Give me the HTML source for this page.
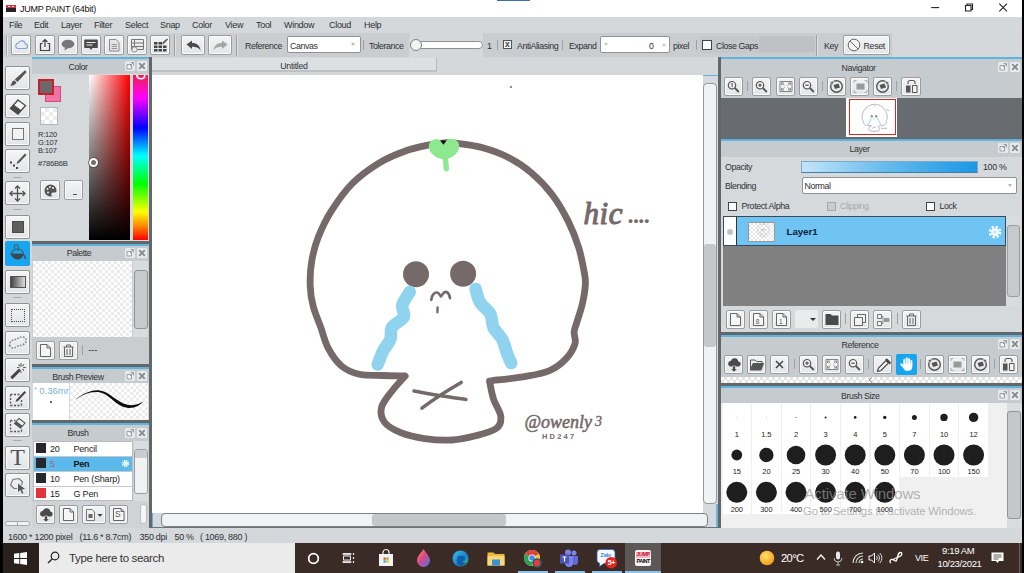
<!DOCTYPE html>
<html><head><meta charset="utf-8"><title>JUMP PAINT</title>
<style>
*{box-sizing:border-box;margin:0;padding:0}
html,body{width:1024px;height:573px;overflow:hidden;background:#d4d8db;font-family:"Liberation Sans","DejaVu Sans",sans-serif;color:#2a2c2e}
#r{position:relative;width:1024px;height:573px;overflow:hidden}
.a{position:absolute}
.t{position:absolute;white-space:nowrap;font-size:10px;line-height:12px;color:#2f3133}
.hd{position:absolute;background:#c6cbcf;border-top:2px solid #5db4dc}
.hd .t{top:2px;font-size:8.8px;letter-spacing:-.4px;color:#333}
.bt{position:absolute;width:19px;height:19px;background:linear-gradient(#f3f4f4,#e3e5e7);border:1px solid #999da0;border-radius:2px;box-shadow:inset 0 0 0 1px #fbfbfb}
.tb{position:absolute;left:5px;width:25px;height:24px;background:linear-gradient(#f4f5f5,#e2e4e6);border:1px solid #8f9396;border-radius:2px;box-shadow:inset 0 0 0 1px #fbfbfb}
.sep{position:absolute;width:1px;background:#9da1a4}
svg{position:absolute;overflow:visible}
</style></head><body><div id="r">

<!-- title bar -->
<div class="a" id="title" style="left:0;top:0;width:1024px;height:17px;background:#fff"></div>
<div class="a" style="left:497px;top:0;width:33px;height:1px;background:#3a6ea5"></div>
<div class="a" style="left:6px;top:4.500px;width:10px;height:7.500px;background:#2a2222;border-top:3px solid #d8303a"></div><div class="a" style="left:8px;top:5.500px;width:2px;height:1px;background:#fff"></div><div class="a" style="left:12px;top:5.500px;width:2px;height:1px;background:#fff"></div>
<div class="t" style="left:20px;top:3px;font-size:9px;letter-spacing:-.25px;color:#111">JUMP PAINT (64bit)</div>
<svg style="left:925px;top:0" width="99" height="17" viewBox="925 0 99 17"><path d="M931.200 7.600h8" stroke="#222" stroke-width="1.100"/><path d="M965.500 5.500h5.500v5.500h-5.500zM967 5.500V4h5.500v5.500H971" stroke="#222" fill="none" stroke-width="1.100"/><path d="M999.300 3.600l7.700 7.700M1007 3.600l-7.700 7.700" stroke="#222" stroke-width="1.100"/></svg>

<!-- menu bar -->
<div class="a" id="menu" style="left:0;top:17px;width:1024px;height:16px;background:#d4d8db"></div>
<div class="t" style="top:19px;left:9px;font-size:9px;letter-spacing:-.3px">File</div>
<div class="t" style="top:19px;left:34px;font-size:9px;letter-spacing:-.3px">Edit</div>
<div class="t" style="top:19px;left:61px;font-size:9px;letter-spacing:-.3px">Layer</div>
<div class="t" style="top:19px;left:94px;font-size:9px;letter-spacing:-.3px">Filter</div>
<div class="t" style="top:19px;left:125px;font-size:9px;letter-spacing:-.3px">Select</div>
<div class="t" style="top:19px;left:160px;font-size:9px;letter-spacing:-.3px">Snap</div>
<div class="t" style="top:19px;left:192px;font-size:9px;letter-spacing:-.3px">Color</div>
<div class="t" style="top:19px;left:225px;font-size:9px;letter-spacing:-.3px">View</div>
<div class="t" style="top:19px;left:256px;font-size:9px;letter-spacing:-.3px">Tool</div>
<div class="t" style="top:19px;left:284px;font-size:9px;letter-spacing:-.3px">Window</div>
<div class="t" style="top:19px;left:329px;font-size:9px;letter-spacing:-.3px">Cloud</div>
<div class="t" style="top:19px;left:364px;font-size:9px;letter-spacing:-.3px">Help</div>

<!-- toolbar -->
<div class="a" id="toolbar" style="left:0;top:33px;width:1024px;height:24px;background:#d4d8db"></div><div class="a" style="left:3px;top:33px;width:233px;height:24px;background:#cbcfd2"></div>
<!--TOOLBAR-S-->
<div class="a" style="left:236px;top:33px;width:656px;height:24px;background:#c9cdd0"></div>
<div class="a" style="left:409px;top:33px;width:74px;height:24px;background:#d5d8db"></div>
<div class="a" style="left:6px;top:36px;width:2px;height:19px;border-left:1px solid #a4a8ab;border-right:1px solid #e6e8e9"></div>
<div class="bt" style="left:11px;top:35px;width:20px;height:20px"><svg style="left:2px;top:3px" width="14" height="11" viewBox="0 0 14 11"><path d="M3.5 9.5h7.5a2.3 2.3 0 0 0 .3-4.6a3.6 3.6 0 0 0-6.9-.8a2.8 2.8 0 0 0-.9 5.4z" fill="none" stroke="#7ea8d6" stroke-width="1.1"/></svg></div>
<div class="bt" style="left:35px;top:35px;width:20px;height:20px"><svg style="left:3px;top:2px" width="12" height="14" viewBox="0 0 12 14"><path d="M3.5 5.5h-2v7h9v-7h-2M6 9V1.5M3.5 4L6 1.5L8.500 4" fill="none" stroke="#444" stroke-width="1.2"/></svg></div>
<div class="bt" style="left:58px;top:35px;width:20px;height:20px"><svg style="left:2px;top:3px" width="14" height="12" viewBox="0 0 14 12"><ellipse cx="7" cy="5" rx="6.300" ry="4.300" fill="#777"/><path d="M4 8l-.5 3.500L8 8.500z" fill="#777"/></svg></div>
<div class="bt" style="left:81px;top:35px;width:20px;height:20px"><svg style="left:2px;top:3px" width="14" height="12" viewBox="0 0 14 12"><path d="M1 .5h12a.8.8 0 0 1 .8.800v7a.8.8 0 0 1-.8.800H8.500L7 11L5.500 9.100H1a.8.8 0 0 1-.8-.8v-7A.8.8 0 0 1 1 .5z" fill="#4a4a4a"/><path d="M2.500 3.500h9M2.500 6h6" stroke="#eee" stroke-width="1.100"/></svg></div>
<div class="bt" style="left:104px;top:35px;width:20px;height:20px"><svg style="left:4px;top:3px" width="11" height="13" viewBox="0 0 11 13"><path d="M.5.500h6.500l3 3v8.500h-9.500z" fill="#e4e4e4" stroke="#8a8a8a"/><path d="M2.500 5.500h5.500M2.500 7.500h5.500M2.500 9.500h5.500" stroke="#8a8a8a" stroke-width=".9"/></svg></div>
<div class="bt" style="left:127px;top:35px;width:20px;height:20px"><svg style="left:2px;top:2px" width="15" height="15" viewBox="0 0 15 15"><path d="M1.500 1.500h12v10h-12zM1.500 5h12M1.500 8.500h12M4.500 1.500v10" fill="none" stroke="#777" stroke-width="1"/><circle cx="4.500" cy="11.500" r="2.600" fill="#ececec" stroke="#888" stroke-width=".9"/></svg></div>
<div class="bt" style="left:150px;top:35px;width:20px;height:20px"><svg style="left:2px;top:2px" width="15" height="15" viewBox="0 0 15 15"><path d="M1 4h3.500v2.500H1zM5.500 4H9v2.500H5.500zM1 7.500h3.500V10H1zM5.500 7.500H9V10H5.500zM10 7.500h3.500V10H10zM1 11h3.500v2.500H1zM5.500 11H9v2.500H5.500zM10 11h3.500v2.500H10z" fill="#444"/><path d="M9 6.500l1-2.500l4-3.500l1 1l-3.700 3.800z" fill="#555"/></svg></div>
<div class="a" style="left:174px;top:35px;width:2px;height:21px;border-left:1px solid #9a9ea1;border-right:1px solid #e1e3e5"></div>
<div class="bt" style="left:181px;top:35px;width:24px;height:20px"><svg style="left:4px;top:4px" width="15" height="11" viewBox="0 0 15 11"><path d="M.5 4.500L6 .5v2.500c5 0 8 2.500 8.500 7.500c-2-3-4.500-3.700-8.500-3.700V9z" fill="#4a4a4a"/></svg></div>
<div class="bt" style="left:208px;top:35px;width:24px;height:20px"><svg style="left:4px;top:4px" width="15" height="11" viewBox="0 0 15 11"><path d="M14.500 4.500L9 .5v2.500c-5 0-8 2.500-8.500 7.500c2-3 4.500-3.700 8.500-3.700V9z" fill="#a4a6a8"/></svg></div>
<div class="a" style="left:236px;top:35px;width:2px;height:21px;border-left:1px solid #9a9ea1;border-right:1px solid #e1e3e5"></div>
<div class="t" style="left:245px;top:39.5px;font-size:8.8px;letter-spacing:-.4px">Reference</div>
<div class="a" style="left:287px;top:36px;width:74px;height:17px;background:#fff;border:1px solid #8e9295;border-radius:2px"></div>
<div class="t" style="left:290px;top:39.5px;font-size:8.8px;letter-spacing:-.4px">Canvas</div>
<div class="a" style="left:351px;top:43px;width:0;height:0;border-left:2.500px solid transparent;border-right:2.500px solid transparent;border-top:3px solid #b5b8ba"></div>
<div class="sep" style="left:363px;top:40px;height:10px"></div>
<div class="t" style="left:369px;top:39.5px;font-size:8.8px;letter-spacing:-.4px">Tolerance</div>
<div class="a" style="left:413px;top:41px;width:70px;height:8px;background:#fff;border:1px solid #8e9295;border-radius:4px"></div>
<div class="a" style="left:410px;top:39px;width:12px;height:12px;background:#f2f3f3;border:1px solid #7e8285;border-radius:6px"></div>
<div class="t" style="left:487px;top:39.5px;font-size:8.8px;letter-spacing:-.4px">1</div>
<div class="sep" style="left:497px;top:40px;height:10px"></div>
<div class="a" style="left:503px;top:40px;width:9px;height:9px;background:#f4f4f4;border:1px solid #555"></div>
<div class="t" style="left:505px;top:38.300px;font-size:8.500px;color:#444;font-weight:bold">x</div>
<div class="t" style="left:517px;top:39.5px;font-size:8.8px;letter-spacing:-.4px">AntiAliasing</div>
<div class="sep" style="left:562px;top:40px;height:10px"></div>
<div class="t" style="left:569px;top:39.5px;font-size:8.8px;letter-spacing:-.4px">Expand</div>
<div class="a" style="left:600px;top:36px;width:70px;height:17px;background:#fff;border:1px solid #8e9295;border-radius:2px"></div>
<div class="a" style="left:604px;top:43px;width:0;height:0;border-left:2.500px solid transparent;border-right:2.500px solid transparent;border-top:3px solid #c5c8ca"></div>
<div class="a" style="left:662px;top:43px;width:0;height:0;border-left:2.500px solid transparent;border-right:2.500px solid transparent;border-bottom:3px solid #c5c8ca"></div>
<div class="t" style="left:649px;top:39.5px;font-size:8.8px;letter-spacing:-.4px">0</div>
<div class="t" style="left:673px;top:39.5px;font-size:8.8px;letter-spacing:-.4px">pixel</div>
<div class="sep" style="left:696px;top:40px;height:10px"></div>
<div class="a" style="left:700px;top:36px;width:115px;height:17px;background:#c4c8cb"></div>
<div class="a" style="left:702px;top:40px;width:10px;height:10px;background:#fff;border:1px solid #444"></div>
<div class="t" style="left:716px;top:39.5px;font-size:8.8px;letter-spacing:-.4px">Close Gaps</div>
<div class="a" style="left:759px;top:37px;width:56px;height:15px;background:#bfc2c5"></div>
<div class="a" style="left:816px;top:35px;width:2px;height:21px;border-left:1px solid #9a9ea1;border-right:1px solid #e1e3e5"></div>
<div class="t" style="left:824px;top:39.5px;font-size:8.8px;letter-spacing:-.4px">Key</div>
<div class="bt" style="left:843px;top:35px;width:47px;height:20px"><svg style="left:3px;top:2px" width="14" height="14" viewBox="0 0 14 14"><circle cx="7" cy="7" r="5.800" fill="#f4f4f4" stroke="#6a6a6a" stroke-width="1"/><path d="M3 3l8 8" stroke="#6a6a6a" stroke-width="1"/></svg><div class="t" style="left:19.500px;top:3.500px;font-size:8.800px;letter-spacing:-.3px">Reset</div></div>
<!--TOOLBAR-E-->

<!-- left tools -->
<div class="a" id="lefttools" style="left:3px;top:57px;width:29px;height:471px;background:#d4d8db"></div>
<!--LEFTTOOLS-S-->
<div class="tb" style="top:66px"><svg style="left:3px;top:3px" width="18" height="17" viewBox="0 0 18 17"><path d="M16 .300l1.700 1.700L8.500 12L5.800 9.500z" fill="#555"/><path d="M5.500 10.500l2 2c-1 2.500-4 3.500-6.500 3c1.500-.8 1.500-2 2-3.200c.4-1.200 1.500-1.800 2.500-1.800z" fill="#555"/></svg></div>
<div class="tb" style="top:94px"><svg style="left:3px;top:4px" width="18" height="16" viewBox="0 0 18 16"><path d="M9 1L16.500 6.500L9 15L1.500 9.500z" fill="#f6f6f6" stroke="#4a4a4a" stroke-width="1.300"/><path d="M1.500 9.500L4.500 6L12 11.500L9 15z" fill="#4a4a4a" stroke="#4a4a4a" stroke-width="1"/></svg></div>
<div class="tb" style="top:122px"><div class="a" style="left:6px;top:5px;width:12px;height:12px;border:1px solid #777;background:#f3f3f3"></div></div>
<div class="tb" style="top:149px"><svg style="left:3px;top:3px" width="18" height="17" viewBox="0 0 18 17"><path d="M16 .500l1.500 1.500L10 10l-2.500 1l1-2.500z" fill="#555"/><path d="M1 8.500h2v2H1zM4 11.500h2v2H4zM7 14h2v2H7z" fill="#444"/></svg></div>
<div class="a" style="left:13px;top:177px;width:9px;height:1px;background:#a8acaf"></div>
<div class="tb" style="top:181px"><svg style="left:3px;top:3px" width="17" height="17" viewBox="0 0 17 17"><path d="M8.500 1v15M1 8.500h15" stroke="#555" stroke-width="1.300"/><path d="M6 3.500L8.500 1L11 3.500M6 13.500L8.500 16L11 13.500M3.500 6L1 8.500L3.500 11M13.500 6L16 8.500L13.500 11" fill="none" stroke="#555" stroke-width="1.300"/></svg></div>
<div class="a" style="left:13px;top:209px;width:9px;height:1px;background:#a8acaf"></div>
<div class="tb" style="top:215px"><div class="a" style="left:6px;top:5px;width:12px;height:12px;background:#5e5e5e;border:1px solid #4a4a4a"></div></div>
<div class="a" style="left:5px;top:241px;width:25px;height:25px;background:#16a5ee;border-radius:2px"><svg style="left:4px;top:3px" width="18" height="19" viewBox="0 0 18 19"><path d="M5.500 4.500V2.500a1.800 1.800 0 0 1 3.600 0V7" fill="none" stroke="#4a5560" stroke-width="1.100"/><path d="M2 10c1-3 4-5 7-5s5.500 2.500 5.500 5z" fill="none" stroke="#4a5560" stroke-width="1.100"/><path d="M2 10h12.500c-.5 3.500-3 5.500-6 5.500s-6-2.500-6.500-5.500z" fill="#3d4750"/><path d="M14.500 10c1.500 1 2.500 2.800 2.500 4.500c0 1-1.500 1-1.500 0c0-1.500-.5-2.500-1.500-3.500z" fill="#3d4750"/></svg></div>
<div class="tb" style="top:270px"><div class="a" style="left:4px;top:5px;width:16px;height:12px;background:linear-gradient(90deg,#444,#ddd);border:1px solid #555"></div></div>
<div class="a" style="left:13px;top:297px;width:9px;height:1px;background:#a8acaf"></div>
<div class="tb" style="top:303px"><div class="a" style="left:5px;top:4.500px;width:13.500px;height:13px;border:1.600px dotted #4a4a4a"></div></div>
<div class="tb" style="top:331px"><svg style="left:2px;top:4px" width="20" height="15" viewBox="0 0 20 15"><path d="M2 10c-2-3 2-6 5-6.500s4-3 8-2.500s4 5 1 7s-5 1-8 3s-5 1-6-1z" fill="none" stroke="#858585" stroke-width="1.600" stroke-dasharray="1.600 1.400"/></svg></div>
<div class="tb" style="top:358px"><svg style="left:3px;top:2px" width="18" height="19" viewBox="0 0 18 19"><path d="M10 7.500l2 2L3.500 18.200l-2.200-2.200z" fill="#444"/><path d="M12 2v4M12 10v2M8 6.500h2.500M14 6.500h3M9.500 3.500l1.500 1.500M15 3.500L13.500 5M15 9.500L13.500 8" stroke="#666" stroke-width="1.100"/></svg></div>
<div class="tb" style="top:386px"><svg style="left:3px;top:3px" width="18" height="17" viewBox="0 0 18 17"><path d="M1.500 4.500h9M1.500 4.500v11M1.500 15.500h11M12.500 15.500v-6" fill="none" stroke="#555" stroke-width="1.300" stroke-dasharray="2 1.500"/><path d="M15.500 1l1.500 1.500L9 11l-2.500 1l1-2.500z" fill="#444"/></svg></div>
<div class="tb" style="top:413px"><svg style="left:3px;top:3px" width="18" height="17" viewBox="0 0 18 17"><path d="M1.500 3.500h5M1.500 3.500v11M1.500 14.500h11M12.500 14.500v-3" fill="none" stroke="#555" stroke-width="1.300" stroke-dasharray="2 1.500"/><path d="M10 1.500L16 6l-4.500 5L5.500 6.500z" fill="#f4f4f4" stroke="#555" stroke-width="1.100"/><path d="M5.500 6.500l2-2.300L13.500 8.700l-2 2.300z" fill="#555"/></svg></div>
<div class="a" style="left:13px;top:440px;width:9px;height:1px;background:#a8acaf"></div>
<div class="tb" style="top:446px"><div class="t" style="left:2.500px;top:-2px;width:18px;text-align:center;font-family:'Liberation Serif',serif;font-size:24px;line-height:24px;color:#555">T</div></div>
<div class="tb" style="top:473px;height:24px"><svg style="left:3px;top:3px" width="18" height="18" viewBox="0 0 18 18"><path d="M1.500 8L4 2.500l6-1L13.500 5l-1 3" fill="none" stroke="#777" stroke-width="1.100"/><path d="M1.500 8L5 11.500h3" fill="none" stroke="#777" stroke-width="1.100"/><path d="M9 6.500l7 5.500l-3.300.5l1.800 3.500l-1.500.7l-1.700-3.600L9 15z" fill="#555"/></svg></div>
<div class="a" style="left:5px;top:521px;width:25px;height:5px;background:#f2f3f4;border:1px solid #a5a9ac;border-radius:2px"></div>
<div class="a" style="left:17px;top:522px;width:1px;height:3px;background:#a5a9ac"></div>
<!--LEFTTOOLS-E-->

<!-- left panels -->
<!--LEFTPANELS-S-->
<!-- panel right dark border -->
<div class="a" style="left:149px;top:57px;width:3px;height:471px;background:#63676a"></div>
<!-- COLOR -->
<div class="hd" style="left:32px;top:57px;width:117px;height:17px"><div class="t" style="left:0;width:92px;text-align:center">Color</div></div>
<div class="a" style="left:32px;top:74px;width:117px;height:167px;background:#d5d9dc"></div>
<svg style="left:125px;top:61px" width="22" height="10" viewBox="0 0 22 10"><rect x="0" y="0" width="10" height="10" rx="1.500" fill="#e6e9eb"/><path d="M2 3.500h4.500v4.500H2z" fill="#f2f3f4" stroke="#9aa0a4" stroke-width="1"/><path d="M5.500 1.500H8.500v3M8.300 1.700L5 5" fill="none" stroke="#9aa0a4" stroke-width="1"/><rect x="12" y="0" width="10" height="10" rx="1.500" fill="#e9ebed"/><path d="M14.200 2.200l5.600 5.600M19.800 2.200l-5.600 5.600" stroke="#868b8f" stroke-width="1.900"/></svg>
<div class="a" style="left:45px;top:86px;width:16px;height:16px;background:#f272a4;border:1px solid #d04a84"></div>
<div class="a" style="left:38px;top:79px;width:16px;height:16px;background:#6e6969;border:2px solid #c5202e"></div>
<div class="a" style="left:40px;top:107px;width:18px;height:18px;border:1px solid #b4b8bb;background:#fff;background-image:linear-gradient(45deg,#ececec 25%,transparent 25%,transparent 75%,#ececec 75%),linear-gradient(45deg,#ececec 25%,transparent 25%,transparent 75%,#ececec 75%);background-size:8px 8px;background-position:0 0,4px 4px"></div>
<div class="t" style="left:38px;top:130px;font-size:7.500px;line-height:10px;letter-spacing:-.2px">R:120</div>
<div class="t" style="left:38px;top:138px;font-size:7.500px;line-height:10px;letter-spacing:-.2px">G:107</div>
<div class="t" style="left:38px;top:146px;font-size:7.500px;line-height:10px;letter-spacing:-.2px">B:107</div>
<div class="t" style="left:38px;top:159.200px;font-size:7.600px;line-height:10px;letter-spacing:-.25px">#786B6B</div>
<div class="bt" style="left:40px;top:180px;width:20px;height:20px"><svg style="left:3px;top:3px" width="13" height="13" viewBox="0 0 13 13"><path d="M6.500.500a6 6 0 1 0 0 12c1.500 0 1.500-1.200 1-2s0-2 1.500-2h2c1 0 1.500-.8 1.500-2a6 6 0 0 0-6-6z" fill="#555"/><circle cx="3.500" cy="5" r="1" fill="#eee"/><circle cx="6" cy="3" r="1" fill="#eee"/><circle cx="9" cy="4" r="1" fill="#eee"/><circle cx="4" cy="8.500" r="1" fill="#eee"/></svg></div>
<div class="bt" style="left:64px;top:180px;width:19px;height:20px"><div class="a" style="left:8px;top:13px;width:4px;height:1px;background:#555"></div></div>
<div class="a" style="left:89px;top:75px;width:41px;height:165px;background:linear-gradient(to bottom,rgba(0,0,0,0),#000),linear-gradient(to right,#fff,#ff0000)"></div>
<div class="a" style="left:133px;top:75px;width:15px;height:165px;background:linear-gradient(to bottom,#f02050 0%,#ff00ff 14%,#0000ff 32%,#00ffff 49%,#00ff00 66%,#ffff00 83%,#ff8000 92%,#ff0000 100%)"></div>
<div class="a" style="left:88.500px;top:157.500px;width:9px;height:9px;border:2px solid #fff;border-radius:50%;background:#786b6b;box-shadow:0 0 0 .7px #444"></div>
<div class="a" style="left:135.500px;top:69.500px;width:10px;height:10px;border:2px solid #fff;border-radius:50%;clip-path:inset(5.500px 0 0 0)"></div>
<!-- PALETTE -->
<div class="a" style="left:32px;top:241px;width:117px;height:3px;background:#63676a"></div>
<div class="hd" style="left:32px;top:244px;width:117px;height:17px"><div class="t" style="left:0;width:94px;text-align:center;top:1px">Palette</div></div>
<svg style="left:125px;top:248px" width="22" height="10" viewBox="0 0 22 10"><rect x="0" y="0" width="10" height="10" rx="1.500" fill="#e6e9eb"/><path d="M2 3.500h4.500v4.500H2z" fill="#f2f3f4" stroke="#9aa0a4" stroke-width="1"/><path d="M5.500 1.500H8.500v3M8.300 1.700L5 5" fill="none" stroke="#9aa0a4" stroke-width="1"/><rect x="12" y="0" width="10" height="10" rx="1.500" fill="#e9ebed"/><path d="M14.200 2.200l5.600 5.600M19.800 2.200l-5.600 5.600" stroke="#868b8f" stroke-width="1.900"/></svg>
<div class="a" style="left:32px;top:261px;width:117px;height:103px;background:#c9cdd0"></div>
<div class="a" style="left:33px;top:261px;width:99px;height:76px;background:#fff;background-image:linear-gradient(45deg,#ebebeb 25%,transparent 25%,transparent 75%,#ebebeb 75%),linear-gradient(45deg,#ebebeb 25%,transparent 25%,transparent 75%,#ebebeb 75%);background-size:6px 6px;background-position:0 0,3px 3px"></div>
<div class="a" style="left:133px;top:261px;width:15px;height:76px;background:#d9dcdf"></div>
<div class="a" style="left:133.500px;top:270px;width:14px;height:59px;background:#c6cacd;border:1px solid #8f9396;border-radius:3px"></div>
<div class="bt" style="left:36px;top:341px;width:19px;height:19px"><svg style="left:3px;top:2px" width="11" height="13" viewBox="0 0 11 13"><path d="M.5.500h6.500l3.500 3.500v8.500H.5z" fill="#f6f6f6" stroke="#666" stroke-width="1"/><path d="M7 .5v3.500h3.500" fill="none" stroke="#666" stroke-width="1"/></svg></div>
<div class="bt" style="left:59px;top:341px;width:19px;height:19px"><svg style="left:3px;top:2px" width="11" height="13" viewBox="0 0 11 13"><path d="M.5 3h10M3.500 3V1h4v2M1.500 3v9.500h8V3M4 5v6M7 5v6" fill="none" stroke="#666" stroke-width="1"/></svg></div>
<div class="sep" style="left:82px;top:345px;height:10px"></div>
<div class="t" style="left:88.500px;top:344px;font-size:8px;letter-spacing:.3px;color:#3a3a3a;font-weight:bold">---</div>
<!-- BRUSH PREVIEW -->
<div class="a" style="left:32px;top:364px;width:117px;height:3px;background:#63676a"></div>
<div class="hd" style="left:32px;top:367px;width:117px;height:16px"><div class="t" style="left:0;width:92px;text-align:center">Brush Preview</div></div>
<svg style="left:125px;top:370.500px" width="22" height="10" viewBox="0 0 22 10"><rect x="0" y="0" width="10" height="10" rx="1.500" fill="#e6e9eb"/><path d="M2 3.500h4.500v4.500H2z" fill="#f2f3f4" stroke="#9aa0a4" stroke-width="1"/><path d="M5.500 1.500H8.500v3M8.300 1.700L5 5" fill="none" stroke="#9aa0a4" stroke-width="1"/><rect x="12" y="0" width="10" height="10" rx="1.500" fill="#e9ebed"/><path d="M14.200 2.200l5.600 5.600M19.800 2.200l-5.600 5.600" stroke="#868b8f" stroke-width="1.900"/></svg>
<div class="a" style="left:32px;top:383px;width:117px;height:37px;background:#d5d9dc"></div>
<div class="a" style="left:33px;top:383px;width:36px;height:36.500px;background:#fff"></div>
<div class="a" style="left:70px;top:383px;width:78px;height:36.500px;background:#fff;background-image:linear-gradient(45deg,#ececec 25%,transparent 25%,transparent 75%,#ececec 75%),linear-gradient(45deg,#ececec 25%,transparent 25%,transparent 75%,#ececec 75%);background-size:6px 6px;background-position:0 0,3px 3px"></div>
<div class="t" style="left:34px;top:383.500px;font-size:9.500px;line-height:11px;color:#7ab0dc;width:34.500px;overflow:hidden"><span style="font-size:7px;vertical-align:2px">*</span> 0.36mm</div>
<div class="a" style="left:49.500px;top:400.500px;width:2px;height:2px;background:#333;border-radius:1px"></div>
<svg style="left:70px;top:383px" width="78" height="36" viewBox="0 0 78 36"><path d="M4.500 17C12 11.500 20 7 28 7.300C40 8 46 19.500 57.500 21.800C64 23 69.500 21 73.800 18.300C70 22.500 64 25.800 57 24.800C45 23 40 10.500 28 9C20 8.300 12 12 4.500 17z" fill="#0c0c0c"/></svg>
<!-- BRUSH -->
<div class="a" style="left:32px;top:420px;width:117px;height:3px;background:#63676a"></div>
<div class="hd" style="left:32px;top:423px;width:117px;height:18px"><div class="t" style="left:0;width:92px;text-align:center;top:1.500px">Brush</div></div>
<svg style="left:125px;top:428px" width="22" height="10" viewBox="0 0 22 10"><rect x="0" y="0" width="10" height="10" rx="1.500" fill="#e6e9eb"/><path d="M2 3.500h4.500v4.500H2z" fill="#f2f3f4" stroke="#9aa0a4" stroke-width="1"/><path d="M5.500 1.500H8.500v3M8.300 1.700L5 5" fill="none" stroke="#9aa0a4" stroke-width="1"/><rect x="12" y="0" width="10" height="10" rx="1.500" fill="#e9ebed"/><path d="M14.200 2.200l5.600 5.600M19.800 2.200l-5.600 5.600" stroke="#868b8f" stroke-width="1.900"/></svg>
<div class="a" style="left:32px;top:441px;width:117px;height:87px;background:#cfd3d6"></div>
<div class="a" style="left:33px;top:441px;width:100px;height:60px;background:#fff;border:1px solid #b9bdc0"></div>
<div class="a" style="left:34px;top:456px;width:98px;height:15px;background:#5cb9ec"></div>
<div class="a" style="left:34px;top:456px;width:98px;height:1px;background:#c5c8ca"></div>
<div class="a" style="left:34px;top:471px;width:98px;height:1px;background:#c5c8ca"></div>
<div class="a" style="left:34px;top:486px;width:98px;height:1px;background:#c5c8ca"></div>
<div class="a" style="left:36px;top:443px;width:10px;height:10px;background:#26282c"></div>
<div class="a" style="left:36px;top:458px;width:10px;height:10px;background:#26282c"></div>
<div class="a" style="left:36px;top:473px;width:10px;height:10px;background:#26282c"></div>
<div class="a" style="left:36px;top:488px;width:10px;height:10px;background:#e53238"></div>
<div class="t" style="left:50px;top:442.500px;font-size:9px;letter-spacing:-.2px;color:#222">20</div>
<div class="t" style="left:50px;top:457.500px;font-size:9px;letter-spacing:-.2px;color:#b05a78">5</div>
<div class="t" style="left:50px;top:472.500px;font-size:9px;letter-spacing:-.2px;color:#222">10</div>
<div class="t" style="left:50px;top:487.500px;font-size:9px;letter-spacing:-.2px;color:#222">15</div>
<div class="t" style="left:73.500px;top:442.500px;font-size:9px;letter-spacing:-.2px;color:#222">Pencil</div>
<div class="t" style="left:73.500px;top:457.500px;font-size:9px;letter-spacing:-.2px;color:#111;font-weight:bold">Pen</div>
<div class="t" style="left:73.500px;top:472.500px;font-size:9px;letter-spacing:-.2px;color:#222">Pen (Sharp)</div>
<div class="t" style="left:73.500px;top:487.500px;font-size:9px;letter-spacing:-.2px;color:#222">G Pen</div>
<svg style="left:121px;top:459px" width="9" height="9" viewBox="0 0 9 9"><circle cx="4.500" cy="4.500" r="2.600" fill="none" stroke="#e8f4fc" stroke-width="2.200" stroke-dasharray="1.300 .75"/><circle cx="4.500" cy="4.500" r="2.200" fill="#e8f4fc"/></svg>
<div class="a" style="left:134px;top:441px;width:14px;height:60px;background:#dadde0"></div>
<div class="a" style="left:134px;top:449px;width:14px;height:45px;background:#f1f2f3;border:1px solid #9a9ea1;border-radius:3px"></div>
<div class="a" style="left:135px;top:450px;width:12px;height:8px;background:#c9ccd0;border-radius:2px 2px 0 0"></div>
<div class="bt" style="left:36px;top:505px;width:19px;height:19px"><svg style="left:2px;top:2px" width="14" height="14" viewBox="0 0 14 14"><path d="M3 8.500h8a2.500 2.500 0 0 0 .3-5a3.800 3.800 0 0 0-7.300-.8A3 3 0 0 0 3 8.500z" fill="#4a4a4a"/><path d="M5.500 8h3v3h1.800L7 14l-3.300-3h1.800z" fill="#4a4a4a" stroke="#eceeef" stroke-width=".6"/></svg></div>
<div class="bt" style="left:59px;top:505px;width:19px;height:19px"><svg style="left:3px;top:2px" width="11" height="13" viewBox="0 0 11 13"><path d="M.5.500h6.500l3.500 3.500v8.500H.5z" fill="#f6f6f6" stroke="#666" stroke-width="1"/><path d="M7 .5v3.500h3.500" fill="none" stroke="#666" stroke-width="1"/></svg></div>
<div class="bt" style="left:82px;top:505px;width:24px;height:19px"><svg style="left:3px;top:3px" width="18" height="12" viewBox="0 0 18 12"><path d="M.5.500h5.500l2.500 2.500v8.500h-8z" fill="#f0f0f0" stroke="#777" stroke-width="1"/><path d="M2.500 5h4v4h-4z" fill="#666"/><path d="M11.500 5h5l-2.500 3z" fill="#444"/></svg></div>
<div class="bt" style="left:109px;top:505px;width:19px;height:19px"><svg style="left:3px;top:2px" width="12" height="13" viewBox="0 0 12 13"><path d="M.5.500h7.500l3 3v9H.5z" fill="#f6f6f6" stroke="#666" stroke-width="1"/><path d="M8 .5v3h3" fill="none" stroke="#666"/></svg><div class="t" style="left:5px;top:3px;font-size:8.500px;line-height:11px;color:#555">S</div></div>
<div class="a" style="left:140px;top:504px;width:7px;height:20px;background:#f4f5f6;border:1px solid #b9bdc0;border-radius:3px"></div>
<!--LEFTPANELS-E-->

<!-- canvas -->
<!--CANVAS-S-->
<div class="a" style="left:152px;top:57px;width:566px;height:18px;background:#d4d8db"></div>
<div class="a" style="left:152px;top:58px;width:285px;height:14px;background:#dde0e2;border-right:1px solid #b5b9bc;border-bottom:2px solid #bdc1c4"></div>
<div class="t" style="left:152px;top:59.500px;width:284px;text-align:center;font-size:8.800px;letter-spacing:-.3px">Untitled</div>
<div class="a" style="left:152px;top:75px;width:551px;height:438px;background:#fff"></div>
<!-- v scrollbar -->
<div class="a" style="left:703px;top:75px;width:15px;height:453px;background:#d6dade"></div>
<div class="a" style="left:703px;top:75px;width:15px;height:1px;background:#5fb4dc"></div>
<div class="a" style="left:703px;top:83px;width:14px;height:421px;background:#f1f2f3;border:1px solid #96999c;border-radius:4px"></div>
<div class="a" style="left:704px;top:244px;width:12px;height:103px;background:#c4c8cb;border-radius:3px"></div>
<!-- h scrollbar -->
<div class="a" style="left:152px;top:513px;width:566px;height:15px;background:#d3d9de"></div>
<div class="a" style="left:152px;top:513px;width:1px;height:15px;background:#5fb4dc"></div>
<div class="a" style="left:161px;top:513px;width:547px;height:14px;background:#f1f2f3;border:1px solid #7d8184;border-radius:4px"></div>
<div class="a" style="left:372px;top:514px;width:134px;height:12px;background:#c4c8cb;border-radius:3px"></div>
<div class="a" style="left:152px;top:527px;width:566px;height:1px;background:#6f7376"></div>
<div class="a" style="left:716px;top:504px;width:2px;height:23px;background:#6ab5dc"></div>
<!-- drawing -->
<svg style="left:152px;top:75px" width="551" height="438" viewBox="152 75 551 438">
<g id="art"><g fill="none" stroke-linecap="round" stroke-linejoin="round">
<path id="hd" d="M405.2 376.0C401.5 375.9 390.6 375.8 383.0 375.5C375.4 375.2 366.2 375.9 359.3 374.3C352.4 372.7 346.7 370.4 341.5 366.0C336.3 361.6 331.6 354.6 328.2 348.2C324.8 341.8 323.3 334.3 320.8 327.4C318.3 320.5 315.1 313.6 313.3 306.7C311.5 299.8 310.4 293.6 310.2 285.9C309.9 278.2 310.4 268.8 311.8 260.7C313.2 252.6 315.0 245.4 318.3 237.1C321.6 228.8 325.7 219.8 331.4 210.9C337.1 202.0 344.5 191.3 352.4 183.4C360.2 175.5 369.8 168.7 378.5 163.3C387.2 157.9 396.4 154.2 404.7 151.2C413.0 148.1 421.7 146.4 428.3 145.0C434.9 143.6 439.1 143.0 444.5 142.8C449.9 142.6 454.7 143.0 460.9 143.8C467.1 144.6 474.0 145.3 481.9 147.6C489.8 149.8 499.7 153.1 508.0 157.3C516.3 161.5 524.2 166.7 531.6 173.0C539.0 179.3 546.5 187.1 552.6 195.2C558.7 203.3 563.9 212.7 568.3 221.4C572.6 230.1 576.1 239.3 578.7 247.6C581.3 255.9 582.9 265.0 584.0 271.1C585.1 277.2 585.7 278.6 585.4 284.0C585.1 289.4 583.8 297.4 582.4 303.7C581.0 309.9 578.5 316.8 577.1 321.5C575.7 326.2 574.5 328.2 574.1 331.9C573.8 335.6 576.3 339.4 575.0 343.8C573.7 348.2 570.3 354.2 566.1 358.6C561.9 363.1 556.5 367.5 549.8 370.5C543.1 373.5 536.0 374.6 526.0 376.4C516.0 378.1 495.6 380.2 489.5 381.0C490.1 383.9 491.5 392.8 493.4 398.7C495.3 404.6 500.3 411.6 500.8 416.5C501.3 421.4 500.6 425.2 496.4 428.4C492.2 431.6 483.0 433.9 475.6 435.8C468.2 437.7 460.4 439.5 451.9 440.0C443.4 440.5 433.0 439.8 424.5 438.6C416.0 437.4 407.5 435.4 400.8 432.7C394.1 430.0 387.7 426.5 384.5 422.3C381.3 418.1 380.3 412.7 381.5 407.5C382.7 402.3 387.9 396.4 391.9 391.2C395.8 385.9 403.0 378.5 405.2 376.0z" stroke="#756969" stroke-width="6.800"/>
<circle cx="416" cy="274.300" r="13" fill="#756969" stroke="none"/>
<circle cx="463.100" cy="273.700" r="13" fill="#756969" stroke="none"/>
<path d="M409.7 291.9C408.5 294.1 403.3 301.0 402.3 305.2C401.3 309.4 405.5 313.3 403.8 317.0C402.1 320.7 394.1 323.7 391.9 327.4C389.7 331.1 391.9 335.3 390.4 339.3C388.9 343.3 385.1 347.0 383.0 351.2C380.9 355.4 378.6 362.3 377.7 364.5" stroke="#8fd3ef" stroke-width="12.500"/>
<path d="M475.6 288.9C476.3 291.1 477.5 298.1 480.0 302.3C482.5 306.5 488.2 309.9 490.4 314.1C492.6 318.3 491.4 323.3 493.4 327.5C495.4 331.7 500.1 335.1 502.3 339.3C504.5 343.5 505.3 348.7 506.8 352.7C508.3 356.7 510.5 361.4 511.2 363.1" stroke="#8fd3ef" stroke-width="12.500"/>
<path d="M414 391C431 394.500 449 397 465.900 399.400M421.900 408.200C435 398 448 390 461.200 382.400" stroke="#756969" stroke-width="3.500"/>
<path d="M431.300 299.800C431.500 295 434.500 292.300 437 292.500C439.500 292.800 440 296 441 296.400C442 296 443 292 445.500 291.900C448 292 449.500 295 450 298.100" stroke="#756969" stroke-width="2.700"/>
<path d="M437.600 307.500L437.400 312.300" stroke="#756969" stroke-width="2.400"/>
<path d="M445.300 156L446.300 168.800" stroke="#8ee890" stroke-width="5.400"/>
</g>
<path d="M444 159.500C438 159 428.800 154 428.800 146.500C428.800 141.500 433 139 437.500 139.300C440.500 139.500 442.500 141 443.800 143C445.500 140.500 448 138.800 451.500 138.800C456 138.800 459.200 142 459.200 146.500C459.200 154 450 159 444 159.500z" fill="#8ee890"/>
<path d="M440 140.500L446.600 140.500L443.500 144.800z" fill="#0a0a0a"/>
</g>
<circle cx="511" cy="87" r=".9" fill="#555"/>
<text x="583.500" y="224" font-family="'Liberation Serif',serif" font-style="italic" font-size="31" fill="#756969" stroke="#756969" stroke-width="1.100" stroke-linejoin="round" letter-spacing=".6">hic</text>
<text x="627.500" y="223" font-family="'Liberation Serif',serif" font-weight="bold" font-size="24" fill="#756969" letter-spacing="-.6">....</text>
<text x="524.500" y="427.800" font-family="'Liberation Serif',serif" font-style="italic" font-size="18" fill="#756969" stroke="#756969" stroke-width=".55" letter-spacing="0">@owenly</text>
<text x="595" y="426.300" font-family="'Liberation Serif',serif" font-style="italic" font-size="14" fill="#756969" stroke="#756969" stroke-width=".4">3</text>
<text x="542" y="438.700" font-family="'Liberation Sans',sans-serif" font-weight="bold" font-size="7.500" fill="#756969" letter-spacing="2.200">HD247</text>
</svg>
<!--CANVAS-E-->

<!-- right panels -->
<!--RIGHTPANELS-S-->
<div class="a" style="left:718px;top:57px;width:3px;height:471px;background:#63676a"></div>
<div class="hd" style="left:721px;top:57px;width:301px;height:41px"><div class="t" style="left:120.500px;top:2.500px">Navigator</div></div>
<svg style="left:998px;top:62px" width="22" height="10" viewBox="0 0 22 10"><rect x="0" y="0" width="10" height="10" rx="1.500" fill="#e6e9eb"/><path d="M2 3.500h4.500v4.500H2z" fill="#f2f3f4" stroke="#9aa0a4" stroke-width="1"/><path d="M5.500 1.500H8.500v3M8.300 1.700L5 5" fill="none" stroke="#9aa0a4" stroke-width="1"/><rect x="12" y="0" width="10" height="10" rx="1.500" fill="#e9ebed"/><path d="M14.200 2.200l5.600 5.600M19.800 2.200l-5.600 5.600" stroke="#868b8f" stroke-width="1.900"/></svg>
<div class="bt" style="left:724px;top:76.5px;width:19px;height:19px;"><svg style="left:1px;top:1px" width="15" height="15" viewBox="0 0 15 15"><circle cx="6" cy="6.200" r="3.700" fill="#f4f4f4" stroke="#555" stroke-width="1.200"/><path d="M8.800 9L12.800 13" stroke="#555" stroke-width="1.800"/><path d="M6.200 4.300v3.800M5.200 5.300l1-1" stroke="#555" stroke-width="1" fill="none"/></svg></div>
<div class="sep" style="left:747px;top:81px;height:10px"></div>
<div class="bt" style="left:752px;top:76.5px;width:19px;height:19px;"><svg style="left:1px;top:1px" width="15" height="15" viewBox="0 0 15 15"><circle cx="6" cy="6.200" r="3.700" fill="#f4f4f4" stroke="#555" stroke-width="1.200"/><path d="M8.800 9L12.800 13" stroke="#555" stroke-width="1.800"/><path d="M4.200 6.200h3.600M6 4.400v3.600" stroke="#555" stroke-width="1.200"/></svg></div>
<div class="bt" style="left:776px;top:76.5px;width:19px;height:19px;"><svg style="left:1px;top:1px" width="16" height="15" viewBox="0 0 16 15"><path d="M2 2.500h12v10h-12z" fill="#f4f4f4" stroke="#858585" stroke-width="1"/><path d="M3.500 6V4h2.500M10 4h2.500v2M12.500 9v2H10M6 11H3.500V9M3.500 4l3 2.500M12.500 4l-3 2.500M12.500 11l-3-2.500M3.500 11l3-2.500" fill="none" stroke="#858585" stroke-width=".9"/></svg></div>
<div class="bt" style="left:799px;top:76.5px;width:19px;height:19px;"><svg style="left:1px;top:1px" width="15" height="15" viewBox="0 0 15 15"><circle cx="6" cy="6.200" r="3.700" fill="#f4f4f4" stroke="#555" stroke-width="1.200"/><path d="M8.800 9L12.800 13" stroke="#555" stroke-width="1.800"/><path d="M4.200 6.200h3.600" stroke="#555" stroke-width="1.200"/></svg></div>
<div class="sep" style="left:822px;top:81px;height:10px"></div>
<div class="bt" style="left:827px;top:76.5px;width:19px;height:19px;"><svg style="left:1px;top:1px" width="15" height="15" viewBox="0 0 15 15"><circle cx="7.500" cy="7.500" r="5.800" fill="none" stroke="#555" stroke-width="1.400"/><path d="M4.500 6l5-1.500l1.500 4l-5 1.500z" fill="#555"/><path d="M1 3l4-.5l-2 3.500z" fill="#555" stroke="#eceeef" stroke-width=".5"/></svg></div>
<div class="bt" style="left:850px;top:76.5px;width:19px;height:19px;"><svg style="left:1.500px;top:1px" width="15" height="15" viewBox="0 0 15 15"><path d="M3.500 4.500h8v6h-8z" fill="#9a9a9a"/><path d="M1 4V1.500h2.500M11.500 1.500H14V4M14 11v2.500h-2.500M3.500 13.500H1V11" fill="none" stroke="#aaa" stroke-width="1"/></svg></div>
<div class="bt" style="left:873px;top:76.5px;width:19px;height:19px;"><svg style="left:1px;top:1px" width="15" height="15" viewBox="0 0 15 15"><circle cx="7.500" cy="7.500" r="5.800" fill="none" stroke="#555" stroke-width="1.400"/><path d="M4.500 6l5-1.500l1.500 4l-5 1.500z" fill="#555"/><path d="M14 3l-4-.5l2 3.500z" fill="#555" stroke="#eceeef" stroke-width=".5"/></svg></div>
<div class="sep" style="left:896px;top:81px;height:10px"></div>
<div class="bt" style="left:901px;top:76.5px;width:20px;height:19px;"><svg style="left:1.500px;top:1px" width="15" height="15" viewBox="0 0 15 15"><path d="M2 6.500h4.500v7H2z" fill="#555"/><path d="M8.500 6.500h4.500v7H8.500z" fill="#f4f4f4" stroke="#555" stroke-width="1"/><path d="M4 5V3.500a2 2 0 0 1 2-2h3a2 2 0 0 1 2 2V5" fill="none" stroke="#555" stroke-width="1.100"/></svg></div>
<div class="a" style="left:721px;top:98px;width:301px;height:40px;background:#686c70"></div>
<div class="a" style="left:846px;top:98px;width:51px;height:39px;background:#fff"></div>
<div class="a" style="left:848.500px;top:98.500px;width:47px;height:36.500px;border:1.300px solid #d32a22"></div>
<svg style="left:846px;top:98px" width="51" height="39" viewBox="846 98 51 39"><use href="#art" transform="translate(833.660 91.130) scale(.0917)" opacity=".75"/><path d="M886.500 109.500l2.500 1.200M881 128.300h6" stroke="#9a9292" stroke-width=".7" fill="none"/></svg>
<div class="a" style="left:721px;top:138px;width:301px;height:1px;background:#63676a"></div>
<div class="hd" style="left:721px;top:139px;width:301px;height:18px"><div class="t" style="left:128.500px;top:1.800px">Layer</div></div>
<svg style="left:998px;top:143px" width="22" height="10" viewBox="0 0 22 10"><rect x="0" y="0" width="10" height="10" rx="1.500" fill="#e6e9eb"/><path d="M2 3.500h4.500v4.500H2z" fill="#f2f3f4" stroke="#9aa0a4" stroke-width="1"/><path d="M5.500 1.500H8.500v3M8.300 1.700L5 5" fill="none" stroke="#9aa0a4" stroke-width="1"/><rect x="12" y="0" width="10" height="10" rx="1.500" fill="#e9ebed"/><path d="M14.200 2.200l5.600 5.600M19.800 2.200l-5.600 5.600" stroke="#868b8f" stroke-width="1.900"/></svg>
<div class="a" style="left:721px;top:157px;width:301px;height:175px;background:#d5d9dc"></div>
<div class="t" style="left:725px;top:161px;font-size:8.800px;letter-spacing:-.4px">Opacity</div>
<div class="a" style="left:801px;top:160.500px;width:177px;height:12px;background:linear-gradient(90deg,#c4e5f8,#6bbdee 45%,#1b97e4);border:1px solid #7fa9c6;border-bottom-color:#3f7fae"></div>
<div class="t" style="left:983px;top:161px;font-size:8.800px;letter-spacing:-.3px">100 %</div>
<div class="t" style="left:725px;top:180px;font-size:8.800px;letter-spacing:-.4px">Blending</div>
<div class="a" style="left:802px;top:177px;width:215px;height:17px;background:#fff;border:1px solid #8e9295;border-radius:2px"></div>
<div class="t" style="left:804.500px;top:180px;font-size:8.800px;letter-spacing:-.4px">Normal</div>
<div class="a" style="left:1008px;top:184px;width:0;height:0;border-left:2.500px solid transparent;border-right:2.500px solid transparent;border-top:3px solid #b5b8ba"></div>
<div class="a" style="left:728px;top:202px;width:9px;height:9px;background:#fff;border:1px solid #444"></div>
<div class="t" style="left:741.500px;top:200px;font-size:8.800px;letter-spacing:-.35px">Protect Alpha</div>
<div class="a" style="left:826.500px;top:202px;width:9px;height:9px;background:#c9cccf;border:1px solid #a4a8ab"></div>
<div class="t" style="left:840px;top:200px;font-size:8.800px;letter-spacing:-.4px;color:#a5a9ac">Clipping</div>
<div class="a" style="left:926px;top:202px;width:9px;height:9px;background:#fff;border:1px solid #444"></div>
<div class="t" style="left:939.500px;top:200px;font-size:8.800px;letter-spacing:-.4px">Lock</div>
<div class="a" style="left:723px;top:216px;width:283px;height:90px;background:#808080"></div>
<div class="a" style="left:723px;top:216px;width:283px;height:30px;background:#6fc4f3;border:1px solid #3b4a55"></div>
<div class="a" style="left:724px;top:217px;width:13px;height:28px;background:#fff;border-right:1px solid #333"></div>
<div class="a" style="left:727px;top:228.500px;width:6px;height:6px;border-radius:3px;background:#c4c4c4"></div>
<div class="a" style="left:748px;top:221.500px;width:27px;height:20px;border:1px solid #999;background:#fff;background-image:linear-gradient(45deg,#e6e6e6 25%,transparent 25%,transparent 75%,#e6e6e6 75%),linear-gradient(45deg,#e6e6e6 25%,transparent 25%,transparent 75%,#e6e6e6 75%);background-size:4px 4px;background-position:0 0,2px 2px"></div>
<svg style="left:748px;top:221px" width="28" height="21" viewBox="748 221 28 21"><use href="#art" transform="translate(743.900 217.800) scale(.0433)" opacity=".7"/></svg>
<div class="t" style="left:786.500px;top:225.500px;font-size:9.800px;letter-spacing:-.1px;font-weight:bold;color:#0c2238">Layer1</div>
<svg style="left:988px;top:224.500px" width="14" height="14" viewBox="0 0 14 14"><circle cx="7" cy="7" r="4.600" fill="none" stroke="#f2f9fe" stroke-width="3.600" stroke-dasharray="2.100 1.510"/><circle cx="7" cy="7" r="3.800" fill="#f2f9fe"/><circle cx="7" cy="7" r="1.200" fill="#bfe2f7"/></svg>
<div class="a" style="left:1007px;top:216px;width:14px;height:90px;background:#d9dcdf"></div>
<div class="a" style="left:1007px;top:225px;width:13px;height:72px;background:#c6cacd;border:1px solid #9a9ea1;border-radius:3px"></div>
<div class="bt" style="left:725.5px;top:309.5px;width:19px;height:19px;"><svg style="left:3px;top:2px" width="11" height="13" viewBox="0 0 11 13"><path d="M.5.500h6.500l3.500 3.500v8.500H.5z" fill="#f6f6f6" stroke="#666" stroke-width="1"/><path d="M7 .5v3.500h3.500" fill="none" stroke="#666" stroke-width="1"/></svg></div>
<div class="bt" style="left:748.5px;top:309.5px;width:19px;height:19px;"><svg style="left:3px;top:2px" width="11" height="13" viewBox="0 0 11 13"><path d="M.5.500h6.500l3.500 3.500v8.500H.5z" fill="#f6f6f6" stroke="#666" stroke-width="1"/><path d="M7 .5v3.500h3.500" fill="none" stroke="#666" stroke-width="1"/><text x="2.800" y="10.500" font-size="6.500" font-family="Liberation Sans,sans-serif" fill="#555">8</text></svg></div>
<div class="bt" style="left:772px;top:309.5px;width:19px;height:19px;"><svg style="left:3px;top:2px" width="11" height="13" viewBox="0 0 11 13"><path d="M.5.500h6.500l3.500 3.500v8.500H.5z" fill="#f6f6f6" stroke="#666" stroke-width="1"/><path d="M7 .5v3.500h3.500" fill="none" stroke="#666" stroke-width="1"/><text x="3" y="10.500" font-size="6.500" font-family="Liberation Sans,sans-serif" fill="#555">1</text></svg></div>
<div class="a" style="left:795px;top:310px;width:23px;height:18px;background:#e9ebec;border-radius:2px"></div>
<div class="a" style="left:810px;top:318px;width:0;height:0;border-left:3px solid transparent;border-right:3px solid transparent;border-top:3.500px solid #333"></div>
<div class="bt" style="left:822px;top:309.5px;width:19px;height:19px;"><svg style="left:2px;top:3px" width="14" height="11" viewBox="0 0 14 11"><path d="M.5 0h5l1.500 1.500h6.500v9.500H.5z" fill="#4a4a4a"/></svg></div>
<div class="sep" style="left:845px;top:313px;height:11px"></div>
<div class="bt" style="left:850px;top:309.5px;width:19px;height:19px;"><svg style="left:3px;top:3px" width="12" height="12" viewBox="0 0 12 12"><path d="M3.500.500h8v8h-8z" fill="#f4f4f4" stroke="#666"/><path d="M.500 3.500h8v8h-8z" fill="#f4f4f4" stroke="#666"/></svg></div>
<div class="bt" style="left:873px;top:309.5px;width:19px;height:19px;"><svg style="left:3px;top:3px" width="13" height="12" viewBox="0 0 13 12"><path d="M.500 .500h4v4h-4zM.500 7.500h4v4h-4z" fill="#f4f4f4" stroke="#777"/><path d="M7 4h5.500v4H7z" fill="#999"/><path d="M4.500 2.500H6v7H4.500" fill="none" stroke="#777" stroke-width=".8"/></svg></div>
<div class="sep" style="left:896.5px;top:313px;height:11px"></div>
<div class="bt" style="left:901.5px;top:309.5px;width:19px;height:19px;"><svg style="left:3px;top:2px" width="11" height="13" viewBox="0 0 11 13"><path d="M.5 3h10M3.500 3V1h4v2M1.500 3v9.500h8V3M4 5v6M7 5v6" fill="none" stroke="#666" stroke-width="1"/></svg></div>
<div class="a" style="left:721px;top:332px;width:301px;height:3px;background:#63676a"></div>
<div class="hd" style="left:721px;top:335px;width:301px;height:42px"><div class="t" style="left:120.500px;top:2.400px">Reference</div></div>
<svg style="left:998px;top:339px" width="22" height="10" viewBox="0 0 22 10"><rect x="0" y="0" width="10" height="10" rx="1.500" fill="#e6e9eb"/><path d="M2 3.500h4.500v4.500H2z" fill="#f2f3f4" stroke="#9aa0a4" stroke-width="1"/><path d="M5.500 1.500H8.500v3M8.300 1.700L5 5" fill="none" stroke="#9aa0a4" stroke-width="1"/><rect x="12" y="0" width="10" height="10" rx="1.500" fill="#e9ebed"/><path d="M14.200 2.200l5.600 5.600M19.800 2.200l-5.600 5.600" stroke="#868b8f" stroke-width="1.900"/></svg>
<div class="bt" style="left:724px;top:355px;width:19px;height:19px;"><svg style="left:2px;top:2px" width="14" height="14" viewBox="0 0 14 14"><path d="M3 8.500h8a2.500 2.500 0 0 0 .3-5a3.800 3.800 0 0 0-7.300-.8A3 3 0 0 0 3 8.500z" fill="#4a4a4a"/><path d="M5.500 8h3v3h1.800L7 14l-3.300-3h1.800z" fill="#4a4a4a" stroke="#eceeef" stroke-width=".6"/></svg></div>
<div class="bt" style="left:747px;top:355px;width:19px;height:19px;"><svg style="left:2px;top:3px" width="14" height="12" viewBox="0 0 14 12"><path d="M.500 1h4.500l1.500 1.500h5.500v2" fill="none" stroke="#555" stroke-width="1"/><path d="M.500 1v10M.500 11l2.500-6.500h10.500L11 11z" fill="#555" stroke="#555" stroke-width="1" stroke-linejoin="round"/></svg></div>
<div class="bt" style="left:770px;top:355px;width:19px;height:19px;"><svg style="left:4px;top:4px" width="9" height="9" viewBox="0 0 9 9"><path d="M1 1l7 7M8 1L1 8" stroke="#444" stroke-width="1.500"/></svg></div>
<div class="sep" style="left:793.5px;top:359px;height:10px"></div>
<div class="bt" style="left:798.5px;top:355px;width:19px;height:19px;"><svg style="left:1px;top:1px" width="15" height="15" viewBox="0 0 15 15"><circle cx="6" cy="6.200" r="3.700" fill="#f4f4f4" stroke="#555" stroke-width="1.200"/><path d="M8.800 9L12.800 13" stroke="#555" stroke-width="1.800"/><path d="M4.200 6.200h3.600M6 4.400v3.600" stroke="#555" stroke-width="1.200"/></svg></div>
<div class="bt" style="left:821.5px;top:355px;width:19px;height:19px;"><svg style="left:1px;top:1px" width="16" height="15" viewBox="0 0 16 15"><path d="M2 2.500h12v10h-12z" fill="#f4f4f4" stroke="#858585" stroke-width="1"/><path d="M3.500 6V4h2.500M10 4h2.500v2M12.500 9v2H10M6 11H3.500V9M3.500 4l3 2.500M12.500 4l-3 2.500M12.500 11l-3-2.500M3.500 11l3-2.500" fill="none" stroke="#858585" stroke-width=".9"/></svg></div>
<div class="bt" style="left:844.5px;top:355px;width:19px;height:19px;"><svg style="left:1px;top:1px" width="15" height="15" viewBox="0 0 15 15"><circle cx="6" cy="6.200" r="3.700" fill="#f4f4f4" stroke="#555" stroke-width="1.200"/><path d="M8.800 9L12.800 13" stroke="#555" stroke-width="1.800"/><path d="M4.200 6.200h3.600" stroke="#555" stroke-width="1.200"/></svg></div>
<div class="sep" style="left:868px;top:359px;height:10px"></div>
<div class="bt" style="left:873px;top:355px;width:19px;height:19px;"><svg style="left:2px;top:2px" width="15" height="15" viewBox="0 0 15 15"><path d="M1.500 13.500l1-3.500L10 2.500l2.500 2.500L5 12.500z" fill="#f4f4f4" stroke="#444" stroke-width="1.100"/><path d="M9 1.500l2-1l4 4l-1 2z" fill="#444"/></svg></div>
<div class="a" style="left:895.500px;top:354px;width:21px;height:21px;background:#16a5ee;border-radius:2px"></div>
<svg style="left:899.500px;top:357px" width="14" height="14" viewBox="0 0 14 14"><g stroke="#fff" stroke-width="1.900" stroke-linecap="round" fill="none"><path d="M4.300 7.500V2.600M6.700 7V1.300M9.100 7V2M11.400 7.500V4M3.600 10L1.300 7.300"/></g><path d="M3.350 6.500h9v3c0 2.500-1.500 4.300-3.500 4.300H6.500C4.800 13.800 3.350 12 3.350 10z" fill="#fff"/></svg>
<div class="sep" style="left:920px;top:359px;height:10px"></div>
<div class="bt" style="left:924.5px;top:355px;width:19px;height:19px;"><svg style="left:1px;top:1px" width="15" height="15" viewBox="0 0 15 15"><circle cx="7.500" cy="7.500" r="5.800" fill="none" stroke="#555" stroke-width="1.400"/><path d="M4.500 6l5-1.500l1.500 4l-5 1.500z" fill="#555"/><path d="M1 3l4-.5l-2 3.500z" fill="#555" stroke="#eceeef" stroke-width=".5"/></svg></div>
<div class="bt" style="left:947.5px;top:355px;width:19px;height:19px;"><svg style="left:1.500px;top:1px" width="15" height="15" viewBox="0 0 15 15"><path d="M3.500 4.500h8v6h-8z" fill="#9a9a9a"/><path d="M1 4V1.500h2.500M11.500 1.500H14V4M14 11v2.500h-2.500M3.500 13.500H1V11" fill="none" stroke="#aaa" stroke-width="1"/></svg></div>
<div class="bt" style="left:970.5px;top:355px;width:19px;height:19px;"><svg style="left:1px;top:1px" width="15" height="15" viewBox="0 0 15 15"><circle cx="7.500" cy="7.500" r="5.800" fill="none" stroke="#555" stroke-width="1.400"/><path d="M4.500 6l5-1.500l1.500 4l-5 1.500z" fill="#555"/><path d="M14 3l-4-.5l2 3.500z" fill="#555" stroke="#eceeef" stroke-width=".5"/></svg></div>
<div class="sep" style="left:994px;top:359px;height:10px"></div>
<div class="bt" style="left:998.5px;top:355px;width:19px;height:19px;"><svg style="left:1.500px;top:1px" width="15" height="15" viewBox="0 0 15 15"><path d="M2 6.500h4.500v7H2z" fill="#555"/><path d="M8.500 6.500h4.500v7H8.500z" fill="#f4f4f4" stroke="#555" stroke-width="1"/><path d="M4 5V3.500a2 2 0 0 1 2-2h3a2 2 0 0 1 2 2V5" fill="none" stroke="#555" stroke-width="1.100"/></svg></div>
<div class="a" style="left:721px;top:377px;width:301px;height:6px;background:#fff;background-image:linear-gradient(45deg,#e4e4e4 25%,transparent 25%,transparent 75%,#e4e4e4 75%),linear-gradient(45deg,#e4e4e4 25%,transparent 25%,transparent 75%,#e4e4e4 75%);background-size:6px 6px;background-position:0 0,3px 3px"></div>
<svg style="left:868px;top:377px" width="5" height="6" viewBox="0 0 5 6"><path d="M4 .5L1 3l3 2.500" fill="none" stroke="#888" stroke-width="1"/></svg>
<div class="a" style="left:721px;top:383px;width:301px;height:3px;background:#63676a"></div>
<div class="hd" style="left:721px;top:386px;width:301px;height:17px"><div class="t" style="left:120px;top:1.600px">Brush Size</div></div>
<svg style="left:998px;top:390px" width="22" height="10" viewBox="0 0 22 10"><rect x="0" y="0" width="10" height="10" rx="1.500" fill="#e6e9eb"/><path d="M2 3.500h4.500v4.500H2z" fill="#f2f3f4" stroke="#9aa0a4" stroke-width="1"/><path d="M5.500 1.500H8.500v3M8.300 1.700L5 5" fill="none" stroke="#9aa0a4" stroke-width="1"/><rect x="12" y="0" width="10" height="10" rx="1.500" fill="#e9ebed"/><path d="M14.200 2.200l5.600 5.600M19.800 2.200l-5.600 5.600" stroke="#868b8f" stroke-width="1.900"/></svg>
<div class="a" style="left:721px;top:403px;width:286px;height:125px;background:#f0f0f0"></div>
<div class="a" style="left:1007px;top:403px;width:15px;height:125px;background:#dadde0"></div>
<div class="a" style="left:1007px;top:411px;width:14px;height:108px;background:#c4c8cb;border:1px solid #8f9396;border-radius:3px"></div>
<div class="a" style="left:722.5px;top:403px;width:28.6px;height:36.5px;background:#fff"></div>
<div class="t" style="left:722.0px;top:430px;width:29.6px;text-align:center;font-size:7.500px;line-height:9px;letter-spacing:-.1px;color:#222">1</div>
<div class="a" style="left:752.1px;top:403px;width:28.6px;height:36.5px;background:#fff"></div>
<div class="t" style="left:751.6px;top:430px;width:29.6px;text-align:center;font-size:7.500px;line-height:9px;letter-spacing:-.1px;color:#222">1.5</div>
<div class="a" style="left:781.7px;top:403px;width:28.6px;height:36.5px;background:#fff"></div>
<div class="t" style="left:781.2px;top:430px;width:29.6px;text-align:center;font-size:7.500px;line-height:9px;letter-spacing:-.1px;color:#222">2</div>
<div class="a" style="left:811.3px;top:403px;width:28.6px;height:36.5px;background:#fff"></div>
<div class="t" style="left:810.8px;top:430px;width:29.6px;text-align:center;font-size:7.500px;line-height:9px;letter-spacing:-.1px;color:#222">3</div>
<div class="a" style="left:840.9px;top:403px;width:28.6px;height:36.5px;background:#fff"></div>
<div class="t" style="left:840.4px;top:430px;width:29.6px;text-align:center;font-size:7.500px;line-height:9px;letter-spacing:-.1px;color:#222">4</div>
<div class="a" style="left:870.5px;top:403px;width:28.6px;height:36.5px;background:#fff"></div>
<div class="t" style="left:870.0px;top:430px;width:29.6px;text-align:center;font-size:7.500px;line-height:9px;letter-spacing:-.1px;color:#222">5</div>
<div class="a" style="left:900.1px;top:403px;width:28.6px;height:36.5px;background:#fff"></div>
<div class="t" style="left:899.6px;top:430px;width:29.6px;text-align:center;font-size:7.500px;line-height:9px;letter-spacing:-.1px;color:#222">7</div>
<div class="a" style="left:929.7px;top:403px;width:28.6px;height:36.5px;background:#fff"></div>
<div class="t" style="left:929.2px;top:430px;width:29.6px;text-align:center;font-size:7.500px;line-height:9px;letter-spacing:-.1px;color:#222">10</div>
<div class="a" style="left:959.3px;top:403px;width:28.6px;height:36.5px;background:#fff"></div>
<div class="t" style="left:958.8px;top:430px;width:29.6px;text-align:center;font-size:7.500px;line-height:9px;letter-spacing:-.1px;color:#222">12</div>
<div class="a" style="left:722.5px;top:440px;width:28.6px;height:36.5px;background:#fff"></div>
<div class="t" style="left:722.0px;top:467px;width:29.6px;text-align:center;font-size:7.500px;line-height:9px;letter-spacing:-.1px;color:#222">15</div>
<div class="a" style="left:752.1px;top:440px;width:28.6px;height:36.5px;background:#fff"></div>
<div class="t" style="left:751.6px;top:467px;width:29.6px;text-align:center;font-size:7.500px;line-height:9px;letter-spacing:-.1px;color:#222">20</div>
<div class="a" style="left:781.7px;top:440px;width:28.6px;height:36.5px;background:#fff"></div>
<div class="t" style="left:781.2px;top:467px;width:29.6px;text-align:center;font-size:7.500px;line-height:9px;letter-spacing:-.1px;color:#222">25</div>
<div class="a" style="left:811.3px;top:440px;width:28.6px;height:36.5px;background:#fff"></div>
<div class="t" style="left:810.8px;top:467px;width:29.6px;text-align:center;font-size:7.500px;line-height:9px;letter-spacing:-.1px;color:#222">30</div>
<div class="a" style="left:840.9px;top:440px;width:28.6px;height:36.5px;background:#fff"></div>
<div class="t" style="left:840.4px;top:467px;width:29.6px;text-align:center;font-size:7.500px;line-height:9px;letter-spacing:-.1px;color:#222">40</div>
<div class="a" style="left:870.5px;top:440px;width:28.6px;height:36.5px;background:#fff"></div>
<div class="t" style="left:870.0px;top:467px;width:29.6px;text-align:center;font-size:7.500px;line-height:9px;letter-spacing:-.1px;color:#222">50</div>
<div class="a" style="left:900.1px;top:440px;width:28.6px;height:36.5px;background:#fff"></div>
<div class="t" style="left:899.6px;top:467px;width:29.6px;text-align:center;font-size:7.500px;line-height:9px;letter-spacing:-.1px;color:#222">70</div>
<div class="a" style="left:929.7px;top:440px;width:28.6px;height:36.5px;background:#fff"></div>
<div class="t" style="left:929.2px;top:467px;width:29.6px;text-align:center;font-size:7.500px;line-height:9px;letter-spacing:-.1px;color:#222">100</div>
<div class="a" style="left:959.3px;top:440px;width:28.6px;height:36.5px;background:#fff"></div>
<div class="t" style="left:958.8px;top:467px;width:29.6px;text-align:center;font-size:7.500px;line-height:9px;letter-spacing:-.1px;color:#222">150</div>
<div class="a" style="left:722.5px;top:477px;width:28.6px;height:37px;background:#fff"></div>
<div class="t" style="left:722.0px;top:504.5px;width:29.6px;text-align:center;font-size:7.500px;line-height:9px;letter-spacing:-.1px;color:#222">200</div>
<div class="a" style="left:752.1px;top:477px;width:28.6px;height:37px;background:#fff"></div>
<div class="t" style="left:751.6px;top:504.5px;width:29.6px;text-align:center;font-size:7.500px;line-height:9px;letter-spacing:-.1px;color:#222">300</div>
<div class="a" style="left:781.7px;top:477px;width:28.6px;height:37px;background:#fff"></div>
<div class="t" style="left:781.2px;top:504.5px;width:29.6px;text-align:center;font-size:7.500px;line-height:9px;letter-spacing:-.1px;color:#222">400</div>
<div class="a" style="left:811.3px;top:477px;width:28.6px;height:37px;background:#fff"></div>
<div class="t" style="left:810.8px;top:504.5px;width:29.6px;text-align:center;font-size:7.500px;line-height:9px;letter-spacing:-.1px;color:#222">500</div>
<div class="a" style="left:840.9px;top:477px;width:28.6px;height:37px;background:#fff"></div>
<div class="t" style="left:840.4px;top:504.5px;width:29.6px;text-align:center;font-size:7.500px;line-height:9px;letter-spacing:-.1px;color:#222">700</div>
<div class="a" style="left:870.5px;top:477px;width:28.6px;height:37px;background:#fff"></div>
<div class="t" style="left:870.0px;top:504.5px;width:29.6px;text-align:center;font-size:7.500px;line-height:9px;letter-spacing:-.1px;color:#222">1000</div>
<svg style="left:721px;top:403px" width="286" height="125" viewBox="721 403 286 125"><circle cx="736.8" cy="417.4" r="0.3" fill="#777"/><circle cx="766.4" cy="417.4" r="0.45" fill="#777"/><circle cx="796.0" cy="417.4" r="0.7" fill="#777"/><circle cx="825.6" cy="417.4" r="1" fill="#1e1e1e"/><circle cx="855.2" cy="417.4" r="1.35" fill="#1e1e1e"/><circle cx="884.8" cy="417.4" r="1.7" fill="#1e1e1e"/><circle cx="914.4" cy="417.4" r="2.5" fill="#1e1e1e"/><circle cx="944.0" cy="417.4" r="3.7" fill="#1e1e1e"/><circle cx="973.6" cy="417.4" r="4.7" fill="#1e1e1e"/><circle cx="736.8" cy="455" r="5.4" fill="#1e1e1e"/><circle cx="766.4" cy="455" r="7.2" fill="#1e1e1e"/><circle cx="796.0" cy="455" r="9.3" fill="#1e1e1e"/><circle cx="825.6" cy="455" r="10.5" fill="#1e1e1e"/><circle cx="855.2" cy="455" r="10.5" fill="#1e1e1e"/><circle cx="884.8" cy="455" r="10.5" fill="#1e1e1e"/><circle cx="914.4" cy="455" r="10.5" fill="#1e1e1e"/><circle cx="944.0" cy="455" r="10.5" fill="#1e1e1e"/><circle cx="973.6" cy="455" r="10.5" fill="#1e1e1e"/><circle cx="736.8" cy="492.3" r="10.5" fill="#1e1e1e"/><circle cx="766.4" cy="492.3" r="10.5" fill="#1e1e1e"/><circle cx="796.0" cy="492.3" r="10.5" fill="#1e1e1e"/><circle cx="825.6" cy="492.3" r="10.5" fill="#1e1e1e"/><circle cx="855.2" cy="492.3" r="10.5" fill="#1e1e1e"/><circle cx="884.8" cy="492.3" r="10.5" fill="#1e1e1e"/></svg>
<div class="t" style="left:804.500px;top:485px;font-size:15px;line-height:18px;letter-spacing:-.15px;color:rgba(150,150,150,.72)">Activate Windows</div>
<div class="t" style="left:803px;top:505px;font-size:11.300px;line-height:13px;letter-spacing:-.15px;color:rgba(150,150,150,.72)">Go to Settings to activate Windows.</div>
<!--RIGHTPANELS-E-->

<!-- status -->
<div class="a" style="left:0;top:528px;width:1024px;height:15px;background:#d4d8db"></div>
<div class="t" style="left:8px;top:530.500px;font-size:9px;letter-spacing:-.3px">1600 * 1200 pixel</div>
<div class="t" style="left:79.500px;top:530.500px;font-size:9px;letter-spacing:-.3px">(11.6 * 8.7cm)</div>
<div class="t" style="left:139.500px;top:530.500px;font-size:9px;letter-spacing:-.3px">350 dpi</div>
<div class="t" style="left:174.500px;top:530.500px;font-size:9px;letter-spacing:-.3px">50 %</div>
<div class="t" style="left:200px;top:530.500px;font-size:9px;letter-spacing:-.3px">( 1069, 880 )</div>

<!-- taskbar -->
<!--TASKBAR-S-->
<div class="a" style="left:0;top:543px;width:1024px;height:30px;background:#3a2b26"></div>
<div class="a" style="left:3px;top:543px;width:36px;height:30px;background:#2a201c"></div>
<svg style="left:14px;top:552px" width="13" height="13" viewBox="0 0 13 13"><path d="M0 1.800L5.300 1v5H0zM6.200.900L13 0v6H6.200zM0 6.900h5.300v5L0 11.200zM6.200 6.900H13V13l-6.800-.9z" fill="#fff"/></svg>
<div class="a" style="left:39px;top:543px;width:256px;height:30px;background:#ebebeb"></div>
<svg style="left:47px;top:551px" width="13" height="13" viewBox="0 0 13 13"><circle cx="8" cy="5" r="3.800" fill="none" stroke="#222" stroke-width="1.200"/><path d="M5.300 7.700L1 12" stroke="#222" stroke-width="1.300"/></svg>
<div class="t" style="left:69px;top:551px;font-size:11.500px;line-height:14px;letter-spacing:-.35px;color:#333">Type here to search</div>
<svg style="left:307px;top:552px" width="13" height="13" viewBox="0 0 13 13"><circle cx="6.500" cy="6.500" r="4.800" fill="none" stroke="#fff" stroke-width="1.800"/></svg>
<svg style="left:342px;top:552px" width="13" height="12" viewBox="0 0 13 12"><path d="M1 1.500h8v1.200H1zM1 9.300h8v1.200H1zM1.500 4h7v4h-7z" fill="none" stroke="#e8e8e8" stroke-width="1"/><path d="M11.500 1v2M11.500 5v2M11.500 9v2" stroke="#e8e8e8" stroke-width="1.200"/></svg>
<svg style="left:378px;top:549px" width="16" height="18" viewBox="0 0 16 18"><path d="M5 5V3.500a3 3 0 0 1 6 0V5" fill="none" stroke="#f0f0f0" stroke-width="1.200"/><path d="M1 5h14v12H1z" fill="#f2f2f2"/><path d="M5.500 8.500h2.300v2.300H5.500z" fill="#e8512e"/><path d="M8.300 8.500h2.300v2.300H8.300z" fill="#7db82f"/><path d="M5.500 11.300h2.300v2.300H5.500z" fill="#2aa4e8"/><path d="M8.300 11.300h2.300v2.300H8.300z" fill="#f5b800"/></svg>
<svg style="left:416px;top:548px" width="15" height="20" viewBox="0 0 15 20"><defs><linearGradient id="dr" x1="0" y1="0" x2="1" y2="1"><stop offset="0" stop-color="#f9a23a"/><stop offset=".45" stop-color="#e0458b"/><stop offset="1" stop-color="#3b7be0"/></linearGradient></defs><path d="M7.500 1C10 5 14 8.500 14 12.500a6.500 6.500 0 0 1-13 0C1 8.500 5 5 7.500 1z" fill="url(#dr)"/></svg>
<svg style="left:452px;top:550px" width="17" height="17" viewBox="0 0 17 17"><defs><linearGradient id="eg" x1="0" y1="0" x2="1" y2="1"><stop offset="0" stop-color="#36c3e8"/><stop offset=".6" stop-color="#1b7fd0"/><stop offset="1" stop-color="#3fc96f"/></linearGradient></defs><circle cx="8.500" cy="8.500" r="8" fill="url(#eg)"/><path d="M5 9a4 3.500 0 0 1 8 0c0 1.500-1.500 2-3 1.500c.5 2 2.500 3 5 2a7 7 0 0 1-6 3.500C6 16 4 12 5 9z" fill="#0c4f9a" opacity=".75"/></svg>
<svg style="left:487px;top:551px" width="18" height="15" viewBox="0 0 18 15"><path d="M.5 1.500h6l1.500 1.500h9.500v11.500H.5z" fill="#f0b93a"/><path d="M.5 5h17v9.500H.5z" fill="#f8d775"/><path d="M5 8.500h8v6H5z" fill="#3f8ed8"/></svg>
<svg style="left:523px;top:549px" width="19" height="19" viewBox="0 0 19 19"><circle cx="9" cy="9" r="8" fill="#e8e8e8"/><path d="M9 9L2.100 5A8 8 0 0 1 15.900 5z" fill="#dc4437"/><path d="M9 9l6.900-4A8 8 0 0 1 9 17z" fill="#f6c227"/><path d="M9 9v8A8 8 0 0 1 2.100 5z" fill="#2da155"/><circle cx="9" cy="9" r="3.600" fill="#fff"/><circle cx="9" cy="9" r="2.800" fill="#4688f1"/><circle cx="14" cy="14" r="4.800" fill="#2e5a5c"/><circle cx="14" cy="14" r="3.200" fill="#e23a4a"/></svg>
<svg style="left:560px;top:549px" width="19" height="18" viewBox="0 0 19 18"><circle cx="14" cy="4" r="2.500" fill="#7b83eb"/><circle cx="8" cy="3.500" r="3" fill="#7b83eb"/><path d="M11 7h7v6a3 3 0 0 1-6 0z" fill="#6069d6"/><path d="M3 7h10v7a4 4 0 0 1-8 0z" fill="#7b83eb"/><path d="M0 5.500h9v9H0z" fill="#4b53bc"/><path d="M2.500 8h4M4.500 8v4.500" stroke="#fff" stroke-width="1.200"/></svg>
<svg style="left:596px;top:548px" width="22" height="22" viewBox="0 0 22 22"><path d="M4 1.500h12a3 3 0 0 1 3 3v8a3 3 0 0 1-3 3H8l-4.500 3v-3.300a3 3 0 0 1-2.500-2.700v-8a3 3 0 0 1 3-3z" fill="#f6f8fc" stroke="#2a62c8" stroke-width=".8"/><circle cx="15.200" cy="14.700" r="5.800" fill="#e3241f"/></svg>
<div class="t" style="left:600.500px;top:552px;font-size:5.500px;line-height:7px;color:#3b7be8;font-weight:bold;letter-spacing:-.2px">Zalo</div>
<div class="t" style="left:607.800px;top:558.800px;font-size:6.800px;line-height:8px;color:#fff;font-weight:bold;letter-spacing:-.3px">5+</div>
<div class="a" style="left:625px;top:543px;width:36px;height:30px;background:#5d5856"></div>
<div class="a" style="left:635px;top:550px;width:16px;height:16px;background:#f8f4f4;border-radius:2px"></div>
<div class="a" style="left:636px;top:551.500px;width:14px;height:6px;background:#f4b8c4"></div><div class="t" style="left:636.300px;top:551px;font-size:5.500px;line-height:7px;color:#d01838;font-weight:bold;letter-spacing:-.45px">JUMP</div>
<div class="t" style="left:636.500px;top:557.800px;font-size:5.500px;line-height:7px;color:#111;font-weight:bold;letter-spacing:-.55px">PAINT</div>
<div class="a" style="left:518px;top:571px;width:30px;height:2px;background:#8cc4ee"></div>
<div class="a" style="left:554.500px;top:571px;width:30px;height:2px;background:#8cc4ee"></div>
<div class="a" style="left:591.500px;top:571px;width:30px;height:2px;background:#8cc4ee"></div>
<div class="a" style="left:625px;top:571px;width:36px;height:2px;background:#8cc4ee"></div>
<svg style="left:759px;top:550px" width="16" height="16" viewBox="0 0 16 16"><defs><radialGradient id="sun" cx=".4" cy=".35" r=".7"><stop offset="0" stop-color="#ffe066"/><stop offset="1" stop-color="#f59a1b"/></radialGradient></defs><circle cx="8" cy="8" r="7.300" fill="url(#sun)"/></svg>
<div class="t" style="left:781px;top:551px;font-size:11.200px;line-height:14px;letter-spacing:-.6px;color:#fff">20°C</div>
<svg style="left:816px;top:553px" width="10" height="8" viewBox="0 0 10 8"><path d="M1 6.500l4-4.500l4 4.500" fill="none" stroke="#fff" stroke-width="1.200"/></svg>
<svg style="left:833px;top:551px" width="10" height="15" viewBox="0 0 10 15"><rect x="3" y="0.500" width="4" height="8" rx="2" fill="#e8e8e8"/><path d="M1 7a4 4 0 0 0 8 0M5 11v3M3 14h4" fill="none" stroke="#bdbdbd" stroke-width="1"/></svg>
<svg style="left:852px;top:552px" width="12" height="12" viewBox="0 0 12 12"><path d="M1 11A10 10 0 0 1 11 1M4 11a7 7 0 0 1 7-7M7 11a4 4 0 0 1 4-4" fill="none" stroke="#ddd" stroke-width="1.100"/><circle cx="10" cy="10" r="1.300" fill="#fff"/></svg>
<svg style="left:868px;top:552px" width="14" height="12" viewBox="0 0 14 12"><path d="M1 4h2.500L6.500 1v10L3.500 8H1z" fill="none" stroke="#fff" stroke-width="1"/><path d="M8.500 4a3 3 0 0 1 0 4M10 2.500a5 5 0 0 1 0 7M11.800 1a7 7 0 0 1 0 10" fill="none" stroke="#e8e8e8" stroke-width=".9"/></svg>
<svg style="left:889px;top:551px" width="14" height="14" viewBox="0 0 14 14"><path d="M2 12c-2-1-1-4 1.500-3.500S7 12 8 8S9 2 11 1.500s2.500 2 .5 3.500S5 7 4 9" fill="none" stroke="#fff" stroke-width="1.300"/></svg>
<div class="t" style="left:915px;top:552px;font-size:9px;line-height:12px;letter-spacing:-.4px;color:#fff">VIE</div>
<div class="t" style="left:942px;top:545px;font-size:9.500px;line-height:12px;letter-spacing:-.35px;color:#fff">9:19 AM</div>
<div class="t" style="left:937.500px;top:558px;font-size:9.500px;line-height:12px;letter-spacing:-.35px;color:#fff">10/23/2021</div>
<svg style="left:991px;top:552px" width="13" height="12" viewBox="0 0 13 12"><path d="M.5.500h12v8.500H8L6.500 11L5 9H.5z" fill="#fff"/><path d="M2.500 3h8M2.500 5h8M2.500 7h5" stroke="#3a2b26" stroke-width=".8"/></svg>
<div class="a" style="left:1019px;top:543px;width:1px;height:30px;background:#6b605c"></div>
<!--TASKBAR-E-->

<div class="a" style="left:0;top:0;width:3px;height:573px;background:#000"></div><div class="a" style="left:1022px;top:0;width:2px;height:573px;background:#000"></div>
</div></body></html>
